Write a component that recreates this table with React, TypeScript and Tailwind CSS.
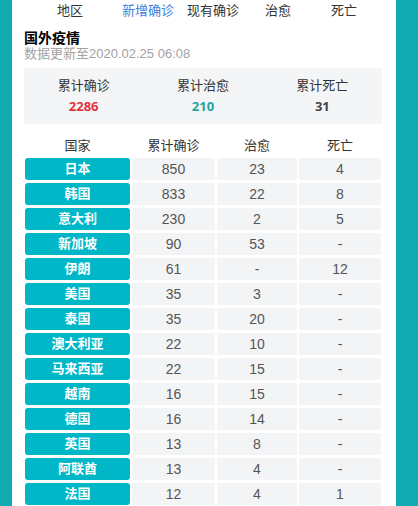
import React from "react";

const tabs = [
  { label: "地区", ml: "ml-[45px]" },
  { label: "新增确诊", ml: "ml-[39px]", active: true },
  { label: "现有确诊", ml: "ml-[13px]" },
  { label: "治愈", ml: "ml-[26px]" },
  { label: "死亡", ml: "ml-[40px]" },
];

const stats = [
  { label: "累计确诊", value: "2286", color: "text-[#e0343c]" },
  { label: "累计治愈", value: "210", color: "text-[#1fa5a3]" },
  { label: "累计死亡", value: "31", color: "text-[#444]" },
];

const rows = [
  ["日本", "850", "23", "4"],
  ["韩国", "833", "22", "8"],
  ["意大利", "230", "2", "5"],
  ["新加坡", "90", "53", "-"],
  ["伊朗", "61", "-", "12"],
  ["美国", "35", "3", "-"],
  ["泰国", "35", "20", "-"],
  ["澳大利亚", "22", "10", "-"],
  ["马来西亚", "22", "15", "-"],
  ["越南", "16", "15", "-"],
  ["德国", "16", "14", "-"],
  ["英国", "13", "8", "-"],
  ["阿联酋", "13", "4", "-"],
  ["法国", "12", "4", "1"],
];

const font = "font-['Liberation_Sans','Noto_Sans_CJK_SC',sans-serif]";

export default function App() {
  return (
    <div className={`h-[506px] overflow-hidden bg-[#13abb2] ${font}`}>
      <div className="ml-3 w-[384px] bg-white pl-3 pr-[14px] pb-6">
        {/* tabs */}
        <div className="-ml-3 flex h-[21px] items-center text-[13px] leading-none text-[#333]">
          {tabs.map((t) => (
            <span
              key={t.label}
              className={`${t.ml} ${t.active ? "text-[#3b7ddd]" : ""}`}
            >
              {t.label}
            </span>
          ))}
        </div>

        {/* title */}
        <div className="mt-[9px] text-[14px] font-bold leading-[16px] text-black">国外疫情</div>
        <div className="text-[13px] leading-[16px] text-[#a3a3a3]">数据更新至2020.02.25 06:08</div>

        {/* summary */}
        <div className="mt-[6px] grid h-[56px] grid-cols-3 content-center rounded-[3px] bg-[#f4f5f7]">
          {stats.map((s) => (
            <div key={s.label} className="flex flex-col items-center">
              <span className="text-[13px] leading-[17px] text-[#333]">{s.label}</span>
              <span className={`mt-[4px] text-[13px] font-bold leading-[17px] ${s.color} font-['Open_Sans',sans-serif]`}>
                {s.value}
              </span>
            </div>
          ))}
        </div>

        {/* table */}
        <div className="ml-px mt-[13px] grid grid-cols-[105px_83px_80px_82px] gap-x-[2px] gap-y-[3px] text-center">
          {["国家", "累计确诊", "治愈", "死亡"].map((h) => (
            <div key={h} className="h-[18px] text-[13px] leading-[18px] text-[#333]">
              {h}
            </div>
          ))}
          {rows.map((r) => (
            <React.Fragment key={r[0]}>
              <div className="flex h-[22px] items-center justify-center rounded-[3px] bg-[#00b7c7] text-[13px] font-bold text-white">
                {r[0]}
              </div>
              {r.slice(1).map((v, i) => (
                <div
                  key={i}
                  className="flex h-[22px] items-center justify-center rounded-[2px] bg-[#f3f4f6] text-[14px] text-[#555]"
                >
                  {v}
                </div>
              ))}
            </React.Fragment>
          ))}
        </div>
      </div>
    </div>
  );
}
